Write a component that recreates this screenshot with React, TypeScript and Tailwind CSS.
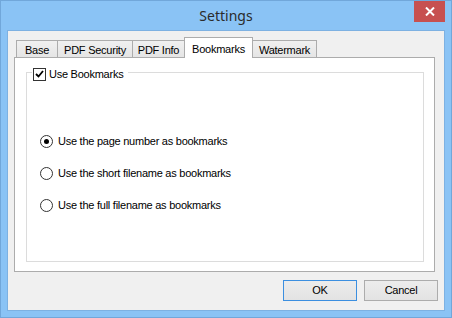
import React, { useState } from 'react';

const tabs = [
    { label: 'Base', w: 'w-[42px]' },
    { label: 'PDF Security', w: 'w-[76px]' },
    { label: 'PDF Info', w: 'w-[53px]' },
    { label: 'Bookmarks', w: 'w-[69px]' },
    { label: 'Watermark', w: 'w-[65px]' },
];

const options = [
    'Use the page number as bookmarks',
    'Use the short filename as bookmarks',
    'Use the full filename as bookmarks',
];

const App: React.FC = () => {
    const [activeTab, setActiveTab] = useState<string>('Bookmarks');
    const [useBookmarks, setUseBookmarks] = useState<boolean>(true);
    const [mode, setMode] = useState<number>(0);

    return (
        <div className="w-[452px] h-[318px] bg-[#8ac3f5] border border-[#71a7da] flex flex-col text-[11px] tracking-[-0.25px] text-black" style={{ fontFamily: '"Liberation Sans", Arial, sans-serif' }}>
            <div className="relative h-[29px] flex items-center justify-center">
                <span className="text-[14px] tracking-normal text-[#2b2b2b] pb-[1px]" style={{ fontFamily: '"Noto Sans", "Open Sans", sans-serif' }}>Settings</span>
                <button className="absolute right-[6px] top-0 w-[31px] h-[21px] bg-[#c75050] flex items-center justify-center">
                    <svg width="10" height="9" viewBox="0 0 10 9">
                        <path d="M1 0.5 L9 8.5 M9 0.5 L1 8.5" stroke="#fff" strokeWidth="2" />
                    </svg>
                </button>
            </div>

            <div className="mx-[6px] mb-[6px] flex-1 bg-[#f0f0f0] border border-[#7db1e2] flex flex-col pl-[6px] pt-[6px]">
                <div className="flex items-end h-[20px] ml-[2px]">
                    {tabs.map((t, i) => {
                        const active = t.label === activeTab;
                        return (
                            <button
                                key={t.label}
                                onClick={() => setActiveTab(t.label)}
                                className={`${t.w} ${i > 0 ? '-ml-px' : ''} border border-b-0 flex items-start justify-center ${active ? 'relative z-10 h-[21px] -mb-px bg-white border-[#acacac] pt-[3px]' : 'h-[17px] bg-gradient-to-b from-[#f0f0f0] to-[#e5e5e5] border-[#acacac] pt-[1px]'}`}
                            >
                                {t.label}
                            </button>
                        );
                    })}
                </div>

                <div className="w-[421px] h-[215px] bg-white border border-[#acacac] pl-[11px] pt-[14px]">
                    <div className="relative w-[398px] h-[190px] border border-[#dcdcdc] pl-[13px] pt-[61px]">
                        <label className="absolute left-[5px] top-[-6px] bg-white flex items-center gap-[3px] pl-px pr-[5px] h-[14px] cursor-default">
                            <span
                                onClick={() => setUseBookmarks(!useBookmarks)}
                                className="w-[13px] h-[13px] border border-[#333] bg-white flex items-center justify-center"
                            >
                                {useBookmarks && (
                                    <svg width="9" height="8" viewBox="0 0 9 8">
                                        <path d="M1 4 L3.5 6.5 L8 1" stroke="#000" strokeWidth="1.8" fill="none" />
                                    </svg>
                                )}
                            </span>
                            <span>Use Bookmarks</span>
                        </label>

                        <div className="flex flex-col gap-[18px]">
                            {options.map((o, i) => (
                                <div key={o} onClick={() => setMode(i)} className="flex items-center h-[14px] gap-[5px] cursor-default">
                                    <span className="w-[13px] h-[13px] rounded-full border border-[#333] bg-white flex items-center justify-center">
                                        {mode === i && <span className="w-[5px] h-[5px] rounded-full bg-black" />}
                                    </span>
                                    <span>{o}</span>
                                </div>
                            ))}
                        </div>
                    </div>
                </div>

                <div className="flex justify-end gap-[7px] mt-[8px] mr-[6px]">
                    <button className="w-[74px] h-[21px] border border-[#3c8fe0] bg-gradient-to-b from-[#ececec] to-[#e3e3e3]">OK</button>
                    <button className="w-[74px] h-[21px] border border-[#acacac] bg-gradient-to-b from-[#ececec] to-[#e3e3e3]">Cancel</button>
                </div>
            </div>
        </div>
    );
};

export default App;
